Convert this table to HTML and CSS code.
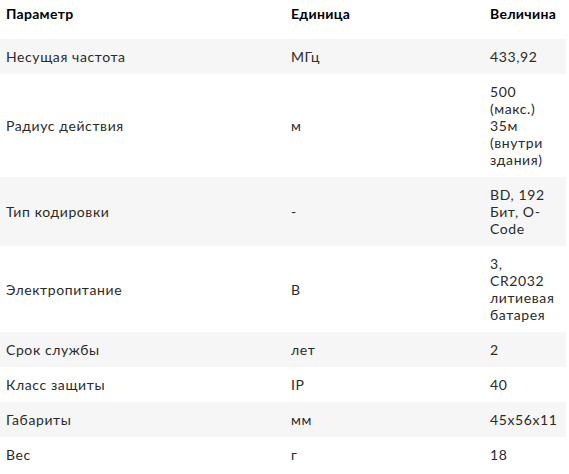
FILE: index.html
```html
<!DOCTYPE html>
<html lang="ru">
<head>
<meta charset="utf-8">
<title>Характеристики</title>
<link rel="stylesheet" href="styles.css">
</head>
<body>
<table class="specs">
  <colgroup>
    <col class="col-param">
    <col class="col-unit">
    <col class="col-value">
  </colgroup>
  <thead>
    <tr>
      <th>Параметр</th>
      <th>Единица</th>
      <th>Величина</th>
    </tr>
  </thead>
  <tbody>
    <tr><td>Несущая частота</td><td>МГц</td><td>433,92</td></tr>
    <tr><td>Радиус действия</td><td>м</td><td>500 (макс.) 35м (внутри здания)</td></tr>
    <tr><td>Тип кодировки</td><td>-</td><td>BD, 192 Бит, O-Code</td></tr>
    <tr><td>Электропитание</td><td>В</td><td>3, CR2032 литиевая батарея</td></tr>
    <tr><td>Срок службы</td><td>лет</td><td>2</td></tr>
    <tr><td>Класс защиты</td><td>IP</td><td>40</td></tr>
    <tr><td>Габариты</td><td>мм</td><td>45x56x11</td></tr>
    <tr><td>Вес</td><td>г</td><td>18</td></tr>
  </tbody>
</table>
</body>
</html>
```
FILE: styles.css
```css
html, body {
  margin: 0;
  padding: 0;
  background: #ffffff;
}

body {
  font-family: "Lato", "Noto Sans", sans-serif;
  font-size: 14px;
  line-height: 17px;
  letter-spacing: 0.6px;
  color: #2a2a2a;
}

.specs {
  width: 566px;
  border-collapse: collapse;
  table-layout: fixed;
}

.col-param { width: 285px; }
.col-unit { width: 199px; }
.col-value { width: 82px; }

.specs th {
  text-align: left;
  font-weight: 700;
  color: #000000;
  letter-spacing: 0.3px;
  padding: 5px 10px 17px 6px;
  vertical-align: middle;
}

.specs td {
  padding: 9px 10px 9px 6px;
  vertical-align: middle;
  text-align: left;
}

.specs tbody tr:nth-child(odd) {
  background: #f6f6f6;
}
```
